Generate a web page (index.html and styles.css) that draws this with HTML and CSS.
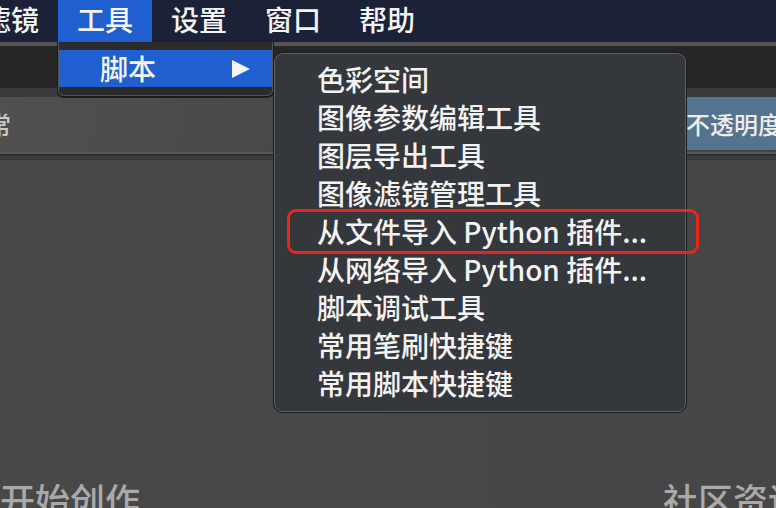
FILE: index.html
```html
<!DOCTYPE html>
<html lang="zh-CN">
<head>
<meta charset="utf-8">
<title>工具 - 脚本</title>
<link rel="stylesheet" href="styles.css">
</head>
<body>
<div class="app">
  <nav class="menubar">
    <span class="menu-item">滤镜</span>
    <span class="menu-item active">工具</span>
    <span class="menu-item">设置</span>
    <span class="menu-item">窗口</span>
    <span class="menu-item">帮助</span>
  </nav>
  <div class="menubar-rule"></div>
  <div class="toolbar"></div>
  <div class="toolbar-rule"></div>
  <div class="props">
    <span class="blend">正常</span>
    <span class="opacity">不透明度</span>
  </div>
  <div class="props-rule"></div>
  <main class="workspace">
    <span class="section-title">开始创作</span>
    <span class="section-title news">社区资讯</span>
  </main>
</div>

<div class="dropdown">
  <div class="dropdown-item">
    <span>脚本</span>
    <span class="arrow"></span>
  </div>
</div>

<ul class="submenu">
  <li>色彩空间</li>
  <li>图像参数编辑工具</li>
  <li>图层导出工具</li>
  <li>图像滤镜管理工具</li>
  <li>从文件导入 Python 插件...</li>
  <li>从网络导入 Python 插件...</li>
  <li>脚本调试工具</li>
  <li>常用笔刷快捷键</li>
  <li>常用脚本快捷键</li>
</ul>

<div class="callout"></div>
</body>
</html>
```

FILE: styles.css
```css
* { box-sizing: border-box; margin: 0; padding: 0; }

html, body {
  width: 776px;
  height: 508px;
  overflow: hidden;
}

body {
  background: #474747;
  font-family: "Noto Sans CJK SC", "Noto Sans", sans-serif;
  font-weight: 500;
  color: #f2f2f2;
  position: relative;
}

.app {
  display: flex;
  flex-direction: column;
  height: 508px;
}

/* ---------- menu bar ---------- */
.menubar {
  display: flex;
  height: 42px;
  background: #1b2136;
  margin-left: -36px;
  flex-shrink: 0;
}

.menu-item {
  padding: 0 19px;
  font-size: 28px;
  line-height: 38px;
  height: 42px;
  color: #f4f4f4;
  white-space: nowrap;
}

.menu-item.active {
  background: #1f5fcf;
}

.menubar-rule {
  height: 4px;
  background: #555;
  flex-shrink: 0;
}

.toolbar {
  height: 42px;
  background: #262626;
  flex-shrink: 0;
}

.toolbar-rule {
  height: 9px;
  background: #3b3b3b;
  flex-shrink: 0;
}

/* ---------- properties row ---------- */
.props {
  display: flex;
  align-items: flex-start;
  height: 55px;
  background: linear-gradient(100deg, #505050 0%, #484848 40%, #444 100%);
  flex-shrink: 0;
}

.blend {
  margin-left: -37px;
  font-size: 24px;
  line-height: 53px;
  color: #c8c8c8;
  white-space: nowrap;
}

.opacity {
  margin-left: auto;
  width: 98px;
  height: 53px;
  padding-left: 8px;
  background: #54738f;
  font-size: 24px;
  line-height: 53px;
  color: #ececec;
  white-space: nowrap;
  overflow: hidden;
}

.props-rule {
  height: 8px;
  flex-shrink: 0;
  background: linear-gradient(#565656 0 2px, #303030 2px 4px, #3c3c3c 4px 7px, #363636 7px 8px);
}

/* ---------- workspace ---------- */
.workspace {
  flex: 1;
  display: flex;
  align-items: flex-start;
  gap: 523px;
  padding-top: 319px;
  background: linear-gradient(90deg, #484848, #464646);
  white-space: nowrap;
}

.section-title {
  font-size: 35px;
  line-height: 40px;
  color: #a9a9a9;
  flex-shrink: 0;
}

/* ---------- tools dropdown ---------- */
.dropdown {
  position: absolute;
  left: 58px;
  top: 42px;
  width: 215px;
  height: 54px;
  padding: 8px 0 0;
  background: #2b2b2b;
  border: 1px solid #555;
  border-top: none;
  border-radius: 0 0 6px 6px;
  box-shadow: 0 1px 0 1px #1c1c1c;
}

.dropdown-item {
  display: flex;
  align-items: center;
  justify-content: space-between;
  height: 37px;
  padding: 0 22px 0 41px;
  background: #1f5fcf;
  font-size: 28px;
  line-height: 37px;
  color: #f4f4f4;
}

.arrow {
  width: 0;
  height: 0;
  border-left: 18px solid #f4f4f4;
  border-top: 9.5px solid transparent;
  border-bottom: 9.5px solid transparent;
}

/* ---------- script submenu ---------- */
.submenu {
  position: absolute;
  left: 274px;
  top: 53px;
  width: 412px;
  padding: 7px 0 8px;
  list-style: none;
  background: #34373c;
  border: 1px solid #5e6166;
  border-radius: 9px;
  box-shadow: 0 0 0 1px #1d1d1f;
}

.submenu li {
  height: 38px;
  padding-left: 42px;
  font-size: 28px;
  line-height: 36px;
  color: #f3f3f3;
  white-space: nowrap;
}

/* ---------- red annotation ---------- */
.callout {
  position: absolute;
  left: 287px;
  top: 209px;
  width: 412px;
  height: 45px;
  border: 3px solid #f0221c;
  border-radius: 9px;
}
```
